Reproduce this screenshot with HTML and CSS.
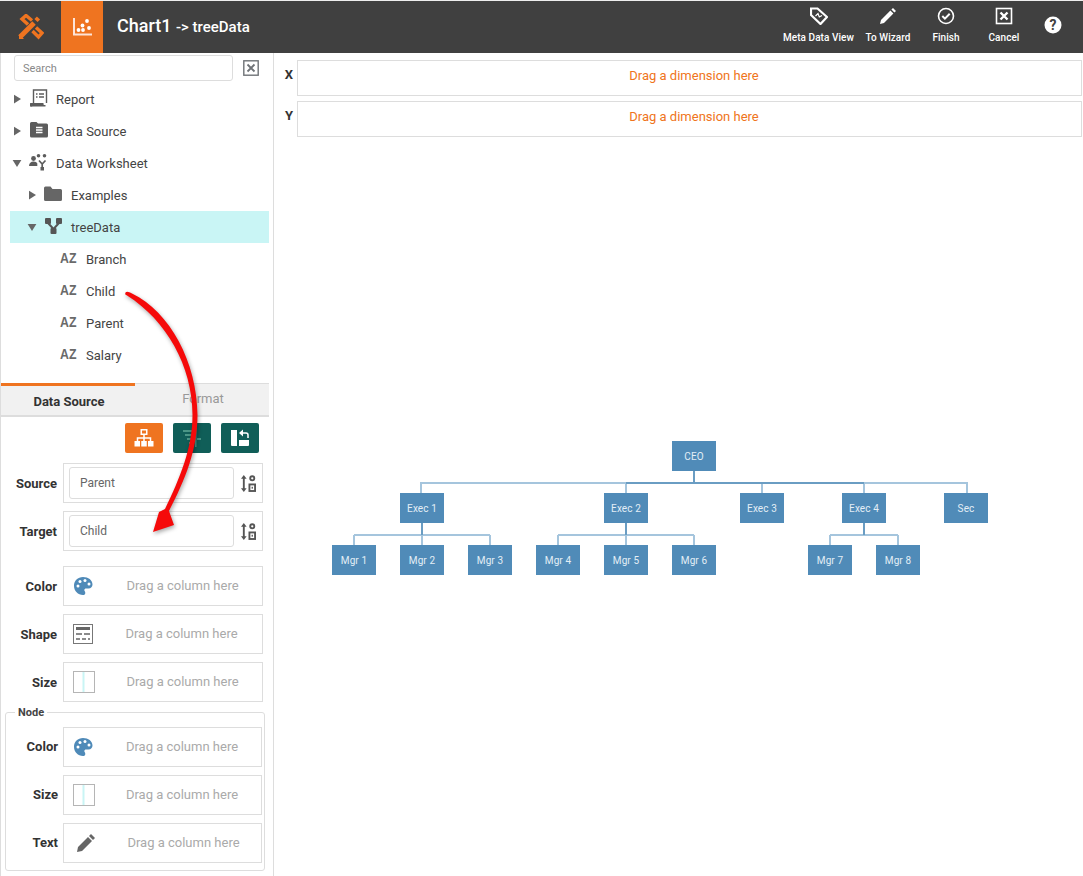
FILE: index.html
```html
<!DOCTYPE html>
<html lang="en">
<head>
    <meta charset="UTF-8" />
    <title>Chart1 - treeData</title>
    <link rel="stylesheet" href="styles.css">
</head>
<body>
<svg class="defs" width="0" height="0">
    <symbol id="palette" viewBox="0 0 20 20">
        <path fill="#4f8ab8" d="M10 1C4.800 1 1 4.800 1 9.800 1 15 5 19 10 19c1.500 0 2.300-1 2.300-2.100 0-1.300-1-1.600-1-2.800 0-1 .8-1.600 1.800-1.600h2.400C18 12.500 19.500 10.800 19.500 8.500 19.500 4 15.300 1 10 1z"/>
        <circle cx="5" cy="10" r="1.500" fill="#fff"/>
        <circle cx="7" cy="5.500" r="1.500" fill="#fff"/>
        <circle cx="12" cy="4.500" r="1.500" fill="#fff"/>
        <circle cx="16" cy="8" r="1.500" fill="#fff"/>
    </symbol>
    <symbol id="sizebox" viewBox="0 0 22 22">
        <rect x=".5" y=".5" width="21" height="21" fill="#fff" stroke="#b5b5b5"/>
        <rect x="9.500" y="1" width="2" height="20" fill="#c9f5f5"/>
    </symbol>
    <symbol id="sort" viewBox="0 0 16 18">
        <path fill="#555" d="M3 0l3 4H4v10h2l-3 4-3-4h2V4H0z"/>
        <circle cx="12" cy="3.500" r="2.200" fill="none" stroke="#555" stroke-width="2"/>
        <rect x="9" y="10" width="6" height="7" fill="none" stroke="#555" stroke-width="2"/>
        <rect x="11.300" y="12.500" width="1.400" height="2" fill="#555"/>
    </symbol>
    <symbol id="caret-right" viewBox="0 0 8 10"><path fill="#666" d="M0 0l8 5-8 5z"/></symbol>
    <symbol id="caret-down" viewBox="0 0 10 8"><path fill="#666" d="M0 0h10L5 8z"/></symbol>
</svg>

<header class="topbar">
    <div class="logo">
        <svg width="26" height="26" viewBox="0 0 26 26">
            <g fill="none" stroke="#ef7420">
                <path stroke-width="5" d="M2 23L16 9"/>
                <path stroke-width="4.500" d="M18 6.500l2.500-2.500"/>
                <path stroke-width="3.400" d="M10 10.500L4 5l4-3.500 6 5"/>
                <path stroke-width="3.400" d="M14.500 17l6 6 3.500-4-6-5.500"/>
            </g>
            <path fill="#ef7420" d="M1 20l5 5H1z"/>
        </svg>
    </div>
    <div class="chart-tab">
        <svg width="20" height="20" viewBox="0 0 20 20" fill="#fff">
            <path fill="#fde4d8" d="M1 1h2v15.500h17v2H1z"/>
            <circle cx="6.500" cy="13" r="1.900"/>
            <circle cx="11" cy="13" r="1.900"/>
            <circle cx="10.500" cy="8.500" r="1.900"/>
            <circle cx="17" cy="11" r="1.900"/>
            <circle cx="15" cy="4" r="1.900"/>
        </svg>
    </div>
    <div class="title">Chart1 <small>-&gt; treeData</small></div>
    <nav class="actions">
        <div class="action meta">
            <svg width="18" height="18" viewBox="0 0 18 18">
                <path fill="none" stroke="#fff" stroke-width="2.200" d="M1 1.500h6.500L17 10l-6.500 7L1 8z"/>
                <path fill="none" stroke="#fff" stroke-width="1.200" d="M5.500 9l2.500-2.500 1.300 3.500 2.700-1.500"/>
            </svg>
            <span>Meta Data View</span>
        </div>
        <div class="action wizard">
            <svg width="18" height="18" viewBox="0 0 18 18"><path fill="#fff" d="M14 1l3 3-1.600 1.600-3-3zM11.400 3.600l3 3L5 16l-4 1 1-4z"/></svg>
            <span>To Wizard</span>
        </div>
        <div class="action finish">
            <svg width="18" height="18" viewBox="0 0 18 18" fill="none" stroke="#fff"><circle cx="9" cy="9" r="7.500" stroke-width="1.600"/><path stroke-width="2" d="M5.300 9l2.600 2.600 4.800-4.800"/></svg>
            <span>Finish</span>
        </div>
        <div class="action cancel">
            <svg width="18" height="18" viewBox="0 0 18 18" fill="none" stroke="#fff"><rect x="1.500" y="1.500" width="15" height="15" stroke-width="1.600"/><path stroke-width="2.400" d="M5.500 5.500l7 7M12.500 5.500l-7 7"/></svg>
            <span>Cancel</span>
        </div>
        <div class="action help">
            <svg width="18" height="18" viewBox="0 0 18 18"><circle cx="9" cy="9" r="8.500" fill="#fff"/><text x="9" y="13.500" text-anchor="middle" class="help-mark">?</text></svg>
        </div>
    </nav>
</header>

<div class="workspace">
    <aside class="sidebar">
        <div class="search-row">
            <input class="search" placeholder="Search">
            <svg class="search-close" width="16" height="16" viewBox="0 0 16 16" fill="none" stroke="#6f7377"><rect x=".8" y=".8" width="14.400" height="14.400" stroke-width="1.400"/><path stroke-width="1.800" d="M4.500 4.500l7 7M11.500 4.500l-7 7"/></svg>
        </div>

        <ul class="tree">
            <li class="level0">
                <svg class="caret" width="7" height="10"><use href="#caret-right"/></svg>
                <svg class="tree-icon" width="18" height="18" viewBox="0 0 18 18" fill="none" stroke="#5c5c5c" stroke-width="1.400"><path d="M3.500 14V1h13v13M6 5h1.500M9 5h5M6 8h1.500M9 8h5"/><path fill="#5c5c5c" stroke="none" d="M0.500 14h13v1.500a2 2 0 0 0 2 .5V17.500H2.500a2 2 0 0 1-2-3.500z"/></svg>
                Report
            </li>
            <li class="level0">
                <svg class="caret" width="7" height="10"><use href="#caret-right"/></svg>
                <svg class="tree-icon" width="18" height="18" viewBox="0 0 18 18"><path fill="#5c5c5c" d="M0 2.500A1.500 1.500 0 0 1 1.500 1h5L8 2.500h8.500A1.500 1.500 0 0 1 18 4v11a1.500 1.500 0 0 1-1.500 1.500h-15A1.500 1.500 0 0 1 0 15z"/><path fill="none" stroke="#fff" stroke-width="1.300" d="M6 6.500h6.500M6 9h6.500M6 11.500h6.500"/></svg>
                Data Source
            </li>
            <li class="level0">
                <svg class="caret-d" width="10" height="7"><use href="#caret-down"/></svg>
                <svg class="tree-icon" width="19" height="18" viewBox="0 0 19 18" fill="#5c5c5c"><circle cx="4.500" cy="5.500" r="2.400"/><path d="M0 13c0-3 2-4.500 4.500-4.500 2 0 3.200.8 3.800 2V13z"/><circle cx="9.500" cy="2.800" r="1.800"/><circle cx="15.500" cy="2.800" r="1.800"/><path fill="none" stroke="#5c5c5c" stroke-width="1.700" d="M10 7.500l3.200 3.500 3.300-3.500M13.200 11v4"/><rect x="11.500" y="14" width="3.500" height="3.500"/></svg>
                Data Worksheet
            </li>
            <li class="level1">
                <svg class="caret" width="7" height="10"><use href="#caret-right"/></svg>
                <svg class="tree-icon" width="18" height="16" viewBox="0 0 18 16"><path fill="#666" d="M0 2a1.500 1.500 0 0 1 1.500-1.500h5L8.500 3H16.500A1.500 1.500 0 0 1 18 4.500v9a1.500 1.500 0 0 1-1.500 1.500h-15A1.500 1.500 0 0 1 0 13.500z"/></svg>
                Examples
            </li>
            <li class="level1 selected">
                <svg class="caret-d" width="10" height="7"><use href="#caret-down"/></svg>
                <svg class="tree-icon" width="17" height="16" viewBox="0 0 17 16" fill="#555"><rect x="0" y="0" width="6" height="6" rx="1"/><rect x="11" y="0" width="6" height="6" rx="1"/><rect x="5.500" y="10" width="6" height="6" rx="1"/><path fill="none" stroke="#555" stroke-width="2" d="M3 5l5.500 6M14 5l-5.500 6"/></svg>
                treeData
            </li>
            <li class="column"><span class="az">AZ</span>Branch</li>
            <li class="column"><span class="az">AZ</span>Child</li>
            <li class="column"><span class="az">AZ</span>Parent</li>
            <li class="column"><span class="az">AZ</span>Salary</li>
        </ul>

        <div class="tabs">
            <div class="tab active">Data Source</div>
            <div class="tab">Format</div>
        </div>

        <div class="tools">
            <button class="tool orange">
                <svg width="20" height="20" viewBox="0 0 20 20" fill="#fff"><path fill-rule="evenodd" d="M6.500 1h7v6h-7zM8 2.500v3h4v-3z"/><path fill="none" stroke="#fff" stroke-width="1.500" d="M10 7v3M3.500 13V10h13v3M10 10v3"/><rect x="0.500" y="13" width="5.500" height="5.500"/><rect x="7.250" y="13" width="5.500" height="5.500"/><rect x="14" y="13" width="5.500" height="5.500"/></svg>
            </button>
            <button class="tool teal">
                <svg width="20" height="20" viewBox="0 0 20 20"><path fill="#4a9686" d="M1 2h11v2H1zM3 6h9v2H3zM5 10h7v2H5zM7 14h5v2H7zM13 0h1.500v19H13z"/><path fill="#4a9686" d="M15 10h4v2h-4z"/></svg>
            </button>
            <button class="tool teal">
                <svg width="20" height="20" viewBox="0 0 20 20" fill="#fff"><path d="M1 2h6v16H2a1 1 0 0 1-1-1z"/><path d="M9 12h10v5a1 1 0 0 1-1 1H9z"/><path fill="none" stroke="#fff" stroke-width="1.500" d="M18 10V7a2 2 0 0 0-2-2h-4"/><path d="M13 1.500v7L9 5z"/></svg>
            </button>
        </div>

        <div class="field">
            <label>Source</label>
            <div class="box box-input">
                <div class="value">Parent</div>
                <svg width="15" height="17"><use href="#sort"/></svg>
            </div>
        </div>
        <div class="field">
            <label>Target</label>
            <div class="box box-input">
                <div class="value">Child</div>
                <svg width="15" height="17"><use href="#sort"/></svg>
            </div>
        </div>

        <div class="drop-group">
            <div class="field">
                <label>Color</label>
                <div class="box"><svg class="cell-icon" width="20" height="20"><use href="#palette"/></svg><span class="hint shift">Drag a column here</span></div>
            </div>
            <div class="field">
                <label>Shape</label>
                <div class="box">
                    <svg class="cell-icon" width="20" height="20" viewBox="0 0 20 20"><rect x=".5" y=".5" width="19" height="19" fill="#fff" stroke="#777"/><rect x="3" y="3" width="14" height="3" fill="#666"/><path stroke="#666" stroke-width="1.300" d="M3 10h6M11 10h6M3 15h4M9 15h4M15 15h2"/></svg>
                    <span class="hint">Drag a column here</span>
                </div>
            </div>
            <div class="field">
                <label>Size</label>
                <div class="box"><svg class="cell-icon" width="22" height="22"><use href="#sizebox"/></svg><span class="hint">Drag a column here</span></div>
            </div>
        </div>

        <fieldset class="node">
            <legend>Node</legend>
            <div class="field">
                <label>Color</label>
                <div class="box"><svg class="cell-icon" width="20" height="20"><use href="#palette"/></svg><span class="hint shift">Drag a column here</span></div>
            </div>
            <div class="field">
                <label>Size</label>
                <div class="box"><svg class="cell-icon" width="22" height="22"><use href="#sizebox"/></svg><span class="hint">Drag a column here</span></div>
            </div>
            <div class="field">
                <label>Text</label>
                <div class="box">
                    <svg class="cell-icon pencil" width="20" height="20" viewBox="0 0 20 20"><path fill="#666" d="M15 1l4 4-2 2-4-4zM12 4l4 4L6 18l-5 1 1-5z"/></svg>
                    <span class="hint shift">Drag a column here</span>
                </div>
            </div>
        </fieldset>
    </aside>

    <main class="main">
        <div class="dim-row"><b>X</b><div class="dim-box">Drag a dimension here</div></div>
        <div class="dim-row"><b>Y</b><div class="dim-box">Drag a dimension here</div></div>

        <div class="canvas">
            <svg class="links" width="809" height="739" viewBox="274 137 809 739" fill="none">
                <g stroke="#a5c5dd" stroke-width="2">
                    <path d="M421 483H967M421 482V493M626 482V493M762 482V493M864 482V493M967 482V493"/>
                    <path d="M354 535H490M354 535V545M422 535V545M490 535V545"/>
                    <path d="M558 535H694M558 535V545M626 535V545M694 535V545"/>
                    <path d="M830 535H898M830 535V545M898 535V545"/>
                </g>
                <g stroke="#6a9dc3" stroke-width="2">
                    <path d="M626 483H864"/>
                    <path d="M694 471V483M422 523V535M626 523V535M864 523V535"/>
                </g>
            </svg>
            <div class="n" style="left:398px;top:304px">CEO</div>
            <div class="n" style="left:126px;top:356px">Exec 1</div>
            <div class="n" style="left:330px;top:356px">Exec 2</div>
            <div class="n" style="left:466px;top:356px">Exec 3</div>
            <div class="n" style="left:568px;top:356px">Exec 4</div>
            <div class="n" style="left:670px;top:356px">Sec</div>
            <div class="n" style="left:58px;top:408px">Mgr 1</div>
            <div class="n" style="left:126px;top:408px">Mgr 2</div>
            <div class="n" style="left:194px;top:408px">Mgr 3</div>
            <div class="n" style="left:262px;top:408px">Mgr 4</div>
            <div class="n" style="left:330px;top:408px">Mgr 5</div>
            <div class="n" style="left:398px;top:408px">Mgr 6</div>
            <div class="n" style="left:534px;top:408px">Mgr 7</div>
            <div class="n" style="left:602px;top:408px">Mgr 8</div>
        </div>
    </main>
</div>

<!-- hand drawn annotation arrow, sits over the sidebar -->
<svg class="drag-arrow" width="1083" height="876" viewBox="0 0 1083 876">
    <path fill="#f50a0a" d="M125.500 292.500 C127 291 129 292 132 293.500 C170 312 197 362 197.500 415 C197.500 450 185 480 169 511 L174 525 L153 532 L159 512 L165 509 C180 478 192.500 448 192.500 415 C192.500 366 166 320 127 295.500 C125 295 125 294 125.500 292.500z"/>
</svg>
</body>
</html>
```

FILE: styles.css
```css
* {
    box-sizing: border-box;
}
html, body {
    margin: 0;
    height: 100%;
    overflow: hidden;
}
body {
    font-family: Roboto, "Liberation Sans", sans-serif;
    font-size: 13px;
    color: #444;
    background: #fff;
    position: relative;
}
.defs {
    position: absolute;
}

/* top bar */
.topbar {
    height: 53px;
    border-top: 1px solid #eee;
    background: #404040;
    color: #fff;
    display: flex;
}
.logo {
    width: 61px;
    display: flex;
    align-items: center;
    justify-content: center;
}
.chart-tab {
    width: 42px;
    background: #ef7420;
    display: flex;
    align-items: center;
    justify-content: center;
}
.title {
    margin-left: 14px;
    font-size: 18px;
    font-weight: 500;
    line-height: 50px;
}
.title small {
    font-size: 15px;
    font-weight: 500;
}
.actions {
    margin-left: auto;
    margin-right: 9px;
    display: flex;
}
.action {
    display: flex;
    flex-direction: column;
    align-items: center;
    padding-top: 6px;
    font-size: 10px;
    font-weight: 500;
    letter-spacing: .05px;
}
.action span {
    margin-top: 7px;
}
.meta { width: 83px; }
.wizard { width: 56px; }
.finish { width: 60px; }
.cancel { width: 56px; }
.help {
    width: 42px;
    padding-top: 15px;
}
.help-mark {
    font-size: 14px;
    font-weight: 700;
    fill: #404040;
}

.workspace {
    display: flex;
    height: 823px;
}

/* left panel */
.sidebar {
    width: 274px;
    flex: none;
    border-left: 1px solid #ddd;
    border-right: 1px solid #ddd;
    height: 823px;
}
.search-row {
    display: flex;
    align-items: center;
    height: 30px;
    padding: 2px 0 2px 13px;
}
.search {
    width: 219px;
    height: 26px;
    border: 1px solid #ddd;
    border-radius: 3px;
    padding: 0 8px;
    font: 11px Roboto, sans-serif;
    outline: none;
}
.search::placeholder {
    color: #888;
}
.search-close {
    margin-left: 10px;
}
.tree {
    list-style: none;
    margin: 0;
    padding: 0;
}
.tree li {
    height: 32px;
    width: 259px;
    margin-left: 9px;
    display: flex;
    align-items: center;
    padding-left: 4px;
}
.caret {
    margin-right: 9px;
}
.caret-d {
    margin-left: -2px;
    margin-right: 7px;
}
.tree-icon {
    margin-right: 8px;
    margin-top: -2px;
}
.tree .level1 {
    padding-left: 19px;
}
.level1 .caret,
.level1 .caret-d {
    margin-right: 8px;
}
.level1 .tree-icon {
    margin-right: 9px;
}
.tree .selected {
    background: #c9f5f5;
}
.tree .column {
    padding-left: 50px;
}
.az {
    width: 26px;
    font-family: "Liberation Sans", sans-serif;
    font-weight: 700;
    font-size: 15px;
    color: #6a6a6a;
    transform: translateY(-2px) scaleX(.82);
    transform-origin: left center;
}

/* tabs */
.tabs {
    display: flex;
    width: 268px;
    height: 34px;
    margin-top: 12px;
    background: #f1f1f1;
    border-top: 1px solid #ddd;
    border-bottom: 2px solid #ddd;
}
.tab {
    flex: 1;
    padding-left: 2px;
    text-align: center;
    line-height: 30px;
    color: #999;
}
.tab.active {
    margin-top: -1px;
    border-top: 3px solid #ef7420;
    color: #333;
    font-weight: 700;
    line-height: 32px;
}
.tools {
    display: flex;
    justify-content: flex-end;
    gap: 10px;
    width: 258px;
    margin-top: 6px;
    margin-bottom: 10px;
}
.tool {
    width: 38px;
    height: 30px;
    border: 0;
    border-radius: 2px;
    padding: 0;
    display: flex;
    align-items: center;
    justify-content: center;
}
.orange { background: #ef7420; }
.teal { background: #105e58; }

/* fields */
.field {
    display: flex;
    align-items: center;
    margin-bottom: 8px;
}
.field label {
    width: 56px;
    margin-right: 6px;
    text-align: right;
    font-weight: 700;
    color: #333;
}
.box {
    flex: none;
    width: 200px;
    height: 40px;
    border: 1px solid #ddd;
    display: flex;
    align-items: center;
    padding-left: 9px;
}
.box-input {
    padding-left: 5px;
}
.value {
    width: 165px;
    height: 32px;
    margin-right: 7px;
    border: 1px solid #ddd;
    border-radius: 3px;
    padding-left: 10px;
    line-height: 31px;
    font-size: 12px;
    color: #666;
}
.cell-icon {
    flex: none;
    margin-top: -1px;
}
.hint {
    flex: 1;
    text-align: center;
    padding-left: 8px;
    color: #aaa;
    white-space: nowrap;
    position: relative;
    top: -1px;
}
.hint.shift {
    padding-left: 10px;
}
.pencil {
    margin-left: 3px;
}
.drop-group {
    margin-top: 15px;
}
.node {
    margin: 0 0 0 4px;
    width: 260px;
    height: 161px;
    padding: 12px 0 0 0;
    border: 1px solid #ddd;
    border-radius: 3px;
}
.node legend {
    margin-left: 9px;
    padding: 0 3px;
    font-size: 11px;
    font-weight: 700;
    line-height: 5px;
    color: #444;
}
.node .field label {
    width: 52px;
    margin-right: 5px;
    padding-bottom: 2px;
}
.node .box {
    width: 199px;
}

/* chart area */
.main {
    flex: 1;
    position: relative;
    padding-top: 7px;
}
.dim-row {
    display: flex;
    margin-bottom: 5px;
}
.dim-row b {
    width: 23px;
    padding-left: 7px;
    text-align: center;
    line-height: 30px;
    font-size: 13px;
    color: #333;
}
.dim-box {
    flex: 1;
    height: 36px;
    margin-right: 1px;
    padding-left: 9px;
    border: 1px solid #ddd;
    text-align: center;
    line-height: 29px;
    color: #ef7420;
}
.canvas {
    position: absolute;
    left: 0;
    top: 84px;
    right: 0;
    bottom: 0;
}
.links {
    position: absolute;
    left: 0;
    top: 0;
}
.n {
    position: absolute;
    width: 44px;
    height: 30px;
    background: #508bb8;
    color: #e3eef6;
    font-size: 10px;
    line-height: 31px;
    letter-spacing: .1px;
    text-align: center;
}
.drag-arrow {
    position: absolute;
    left: 0;
    top: 0;
    pointer-events: none;
    filter: drop-shadow(1px 2px 2px rgba(0,0,0,.35));
}
```
